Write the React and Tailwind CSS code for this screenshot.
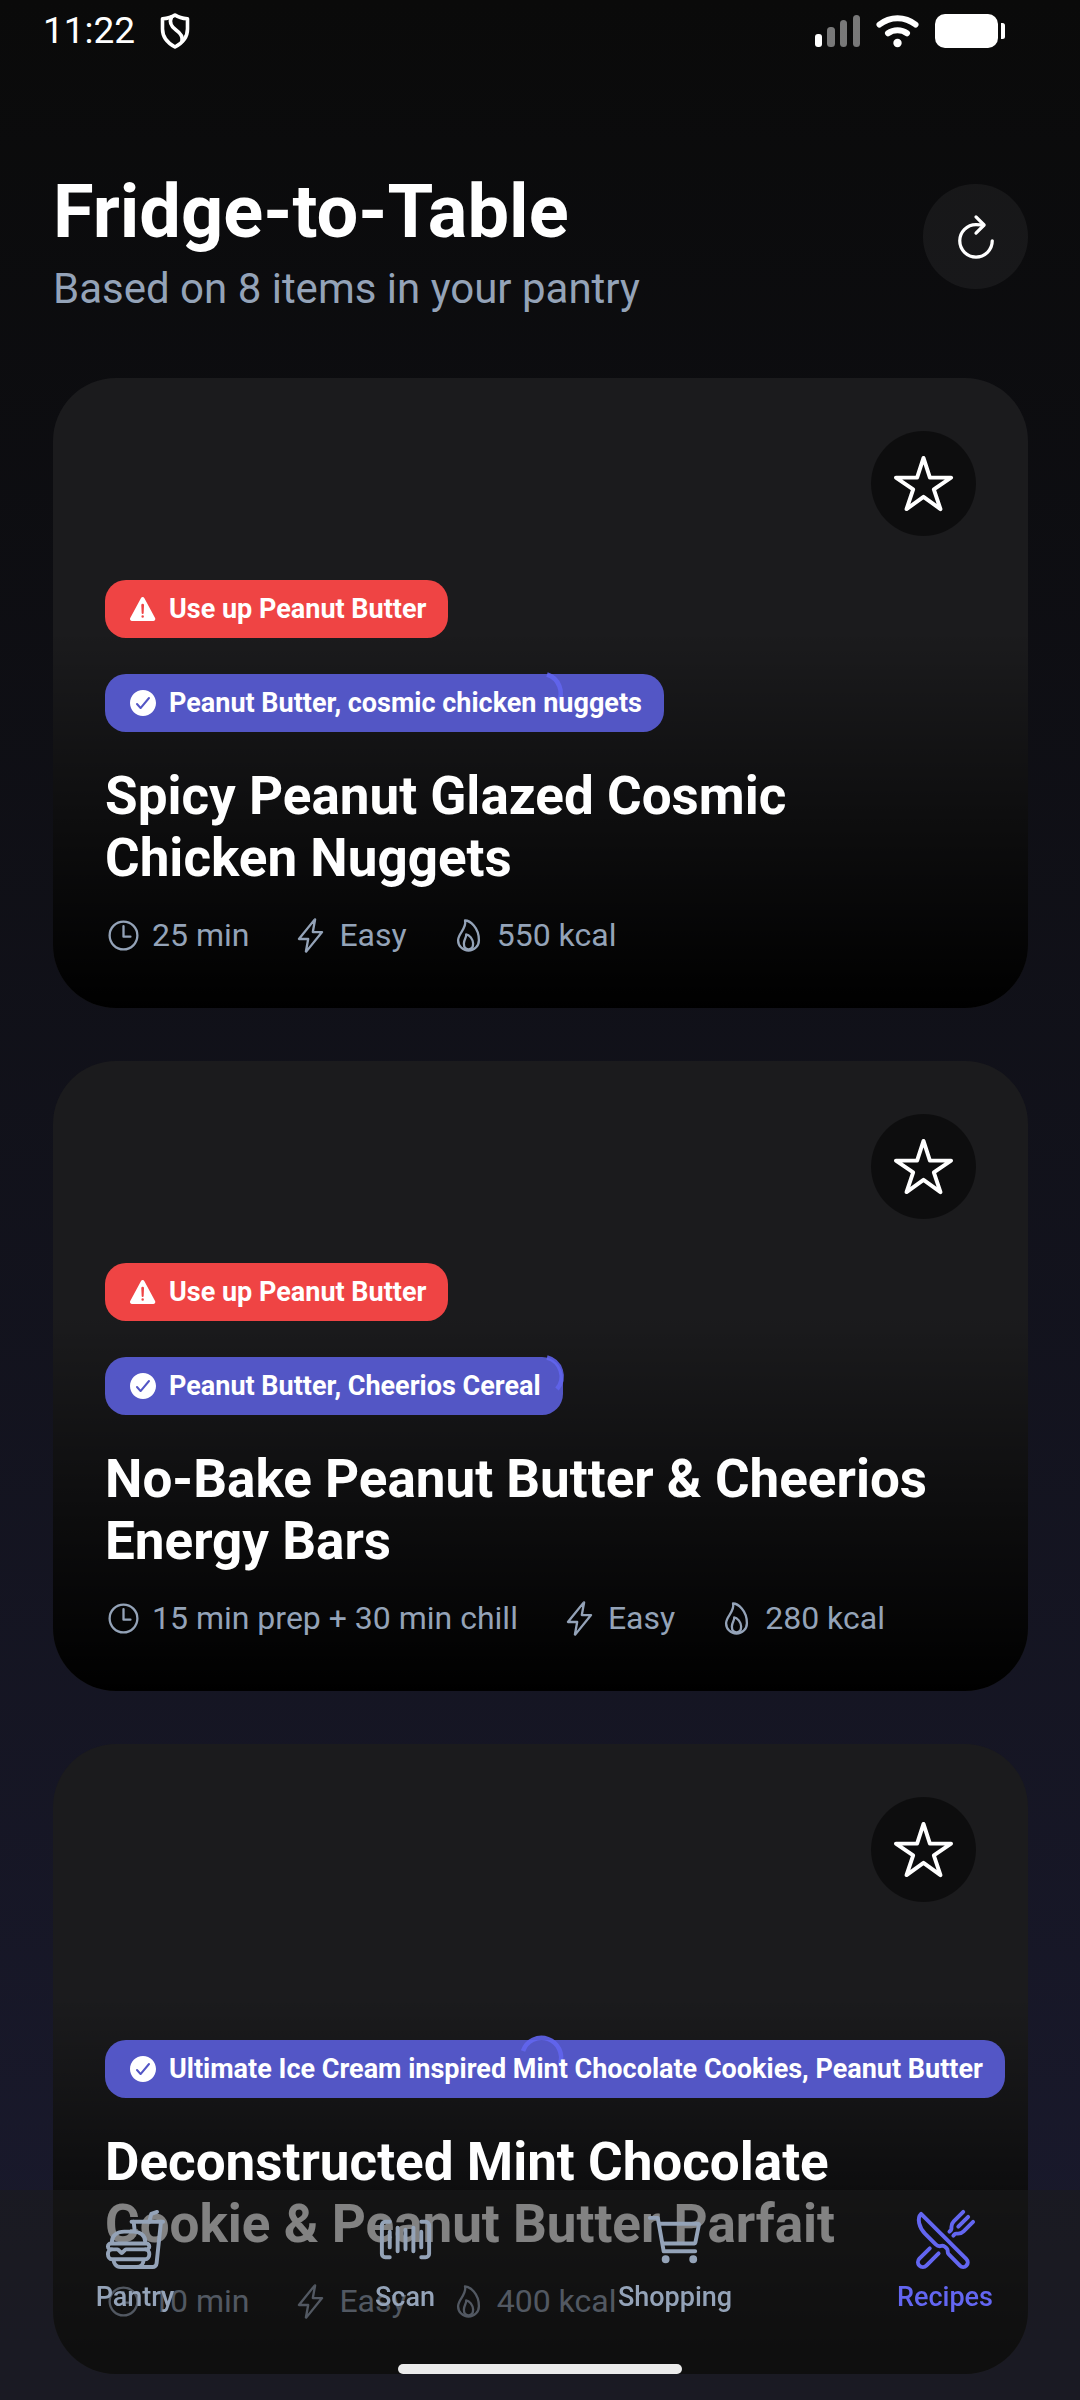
import React, { useState } from "react";
import {
  IoBarcodeOutline,
  IoCartOutline,
  IoCheckmarkCircle,
  IoFastFoodOutline,
  IoFlameOutline,
  IoFlashOutline,
  IoRefreshOutline,
  IoRestaurantOutline,
  IoStar,
  IoStarOutline,
  IoTimeOutline,
  IoWarning,
} from "react-icons/io5";

const PANTRY_COUNT = 8;

const RECIPES = [
  {
    id: 1,
    title: "Spicy Peanut Glazed Cosmic Chicken Nuggets",
    useUp: "Peanut Butter",
    matched: ["Peanut Butter", "cosmic chicken nuggets"],
    time: "25 min",
    difficulty: "Easy",
    calories: 550,
    arc: "M46 26.5A19.5 19.5 0 0 1 57 55",
  },
  {
    id: 2,
    title: "No-Bake Peanut Butter & Cheerios Energy Bars",
    useUp: "Peanut Butter",
    matched: ["Peanut Butter", "Cheerios Cereal"],
    time: "15 min prep + 30 min chill",
    difficulty: "Easy",
    calories: 280,
    arc: "M46 26.5A19.5 19.5 0 0 1 56 58",
  },
  {
    id: 3,
    title: "Deconstructed Mint Chocolate Cookie & Peanut Butter Parfait",
    useUp: null,
    matched: [
      "Ultimate Ice Cream inspired Mint Chocolate Cookies",
      "Peanut Butter",
    ],
    time: "10 min",
    difficulty: "Easy",
    calories: 400,
    arc: "M22 37A19.5 19.5 0 0 1 59 50",
  },
];

const TABS = [
  { name: "Pantry", Icon: IoFastFoodOutline },
  { name: "Scan", Icon: IoBarcodeOutline },
  { name: "Shopping", Icon: IoCartOutline },
  { name: "Recipes", Icon: IoRestaurantOutline },
];

const StatusBar = () => (
  <div className="flex h-[62px] items-start justify-between pl-[43px] pr-[75px]">
    <div className="flex items-center gap-6 pt-[9px]">
      <span className="text-[37px] leading-[44px]">11:22</span>
      <svg
        width="32"
        height="38"
        viewBox="0 0 32 38"
        fill="none"
        stroke="white"
        strokeWidth="3.6"
        strokeLinejoin="round"
        strokeLinecap="round"
      >
        <path d="M16 3C12.5 5.5 8 6.5 3.5 6.8V17c0 8 5 14 12.5 18C23.5 31 28.5 25 28.5 17V6.8C24 6.5 19.5 5.5 16 3z" />
        <path d="M12.500 5c-2.500 5.500-.5 9.500 4.500 13 5 3.500 7 6.500 6 11" />
      </svg>
    </div>
    <div className="flex items-center gap-4 pt-[14px]">
      <svg width="45" height="34" viewBox="0 0 45 34" fill="white">
        <rect x="0" y="20" width="7" height="13" rx="3" />
        <rect x="12" y="13" width="8" height="20" rx="3.5" opacity=".45" />
        <rect x="25" y="6" width="7" height="27" rx="3.5" opacity=".45" />
        <rect x="38" y="1" width="7" height="32" rx="3.5" opacity=".45" />
      </svg>
      <svg
        width="43"
        height="34"
        viewBox="0 0 43 34"
        fill="none"
        stroke="white"
        strokeWidth="6"
        strokeLinecap="round"
      >
        <path d="M3.5 10.5C14 2 29 2 39.5 10.5" />
        <path d="M12 19.3C17.5 15.3 25.5 15.3 31 19.3" />
        <circle cx="21.5" cy="29" r="4.2" fill="white" stroke="none" />
      </svg>
      <svg width="70" height="34" viewBox="0 0 70 34" fill="white">
        <rect x="0" y="0" width="63" height="34" rx="10" />
        <path d="M66 9h1.5a2.5 2.5 0 0 1 2.5 2.5v11a2.5 2.5 0 0 1-2.5 2.5H66z" />
      </svg>
    </div>
  </div>
);

const Pill = ({ Icon, className, children }) => (
  <span
    className={`flex items-center gap-[10px] self-start whitespace-nowrap rounded-[21px] px-[22px] py-[13px] text-[27px] font-bold leading-8 ${className}`}
  >
    <Icon className="h-8 w-8 shrink-0" />
    {children}
  </span>
);

const Meta = ({ Icon, children }) => (
  <span className="flex items-center gap-[10px]">
    <Icon className="h-[37px] w-[37px]" />
    {children}
  </span>
);

const RecipeCard = ({ recipe }) => {
  const [saved, setSaved] = useState(false);
  const Star = saved ? IoStar : IoStarOutline;

  return (
    <article className="relative flex min-h-[630px] flex-col justify-end overflow-hidden rounded-[63px] bg-[#1b1b1d]">
      {/* Image loading spinner */}
      <div className="absolute inset-0 flex items-center justify-center">
        <svg
          width="80"
          height="90"
          viewBox="0 0 80 90"
          fill="none"
          stroke="#6366f1"
          strokeWidth="4.5"
        >
          <path d={recipe.arc} />
        </svg>
      </div>
      <div className="absolute inset-0 bg-linear-to-b from-transparent from-40% to-black" />

      <div className="relative flex flex-col px-[52px] pb-[54px]">
        {recipe.useUp && (
          <Pill Icon={IoWarning} className="mb-9 bg-[#ef4444]">
            Use up {recipe.useUp}
          </Pill>
        )}
        <Pill Icon={IoCheckmarkCircle} className="mb-[33px] bg-[#6366f1]/80">
          {recipe.matched.join(", ")}
        </Pill>
        <h2 className="mb-7 text-[53px] font-bold leading-[62px]">
          {recipe.title}
        </h2>
        <div className="flex gap-[43px] text-[32px] leading-[37px] text-[#94a3b8]">
          <Meta Icon={IoTimeOutline}>{recipe.time}</Meta>
          <Meta Icon={IoFlashOutline}>{recipe.difficulty}</Meta>
          <Meta Icon={IoFlameOutline}>{recipe.calories} kcal</Meta>
        </div>
      </div>

      <button
        type="button"
        aria-label="Save recipe"
        aria-pressed={saved}
        onClick={() => setSaved(!saved)}
        className="absolute right-[52px] top-[53px] flex h-[105px] w-[105px] items-center justify-center rounded-full bg-black/50"
      >
        <Star className="h-[63px] w-[63px]" />
      </button>
    </article>
  );
};

const TabBar = ({ active, onChange }) => (
  <nav className="fixed inset-x-0 bottom-0 flex h-[210px] bg-[#1b1b1c]/55 pt-[18px]">
    {TABS.map(({ name, Icon }) => (
      <button
        key={name}
        type="button"
        onClick={() => onChange(name)}
        className={`flex flex-1 flex-col items-center gap-[10px] text-[27px] font-medium leading-8 ${
          active === name ? "text-[#6366f1]" : "text-[#94a3b8]"
        }`}
      >
        <Icon className="h-[63px] w-[63px]" />
        {name}
      </button>
    ))}
    {/* Home indicator */}
    <div className="absolute bottom-[26px] left-1/2 h-[10px] w-[284px] -translate-x-1/2 rounded-full bg-[#ebebeb]" />
  </nav>
);

export default function App() {
  const [tab, setTab] = useState("Recipes");

  return (
    <div className="min-h-screen bg-linear-to-b from-[#0a0a0a] to-[#1a1a2e] font-[Roboto,sans-serif] text-white">
      <StatusBar />
      <main className="pb-[27px] pl-[53px] pr-[52px] pt-[106px]">
        <header className="mb-16 flex items-start justify-between">
          <div>
            <h1 className="text-[74px] font-bold leading-[88px]">
              Fridge-to-Table
            </h1>
            <p className="mt-2 text-[42px] leading-[50px] text-[#94a3b8]">
              Based on {PANTRY_COUNT} items in your pantry
            </p>
          </div>
          <button
            type="button"
            aria-label="Refresh recipes"
            className="mt-4 flex h-[105px] w-[105px] items-center justify-center rounded-full bg-white/5"
          >
            <IoRefreshOutline className="h-[52px] w-[52px]" />
          </button>
        </header>

        <div className="flex flex-col gap-[53px]">
          {RECIPES.map((recipe) => (
            <RecipeCard key={recipe.id} recipe={recipe} />
          ))}
        </div>
      </main>
      <TabBar active={tab} onChange={setTab} />
    </div>
  );
}
